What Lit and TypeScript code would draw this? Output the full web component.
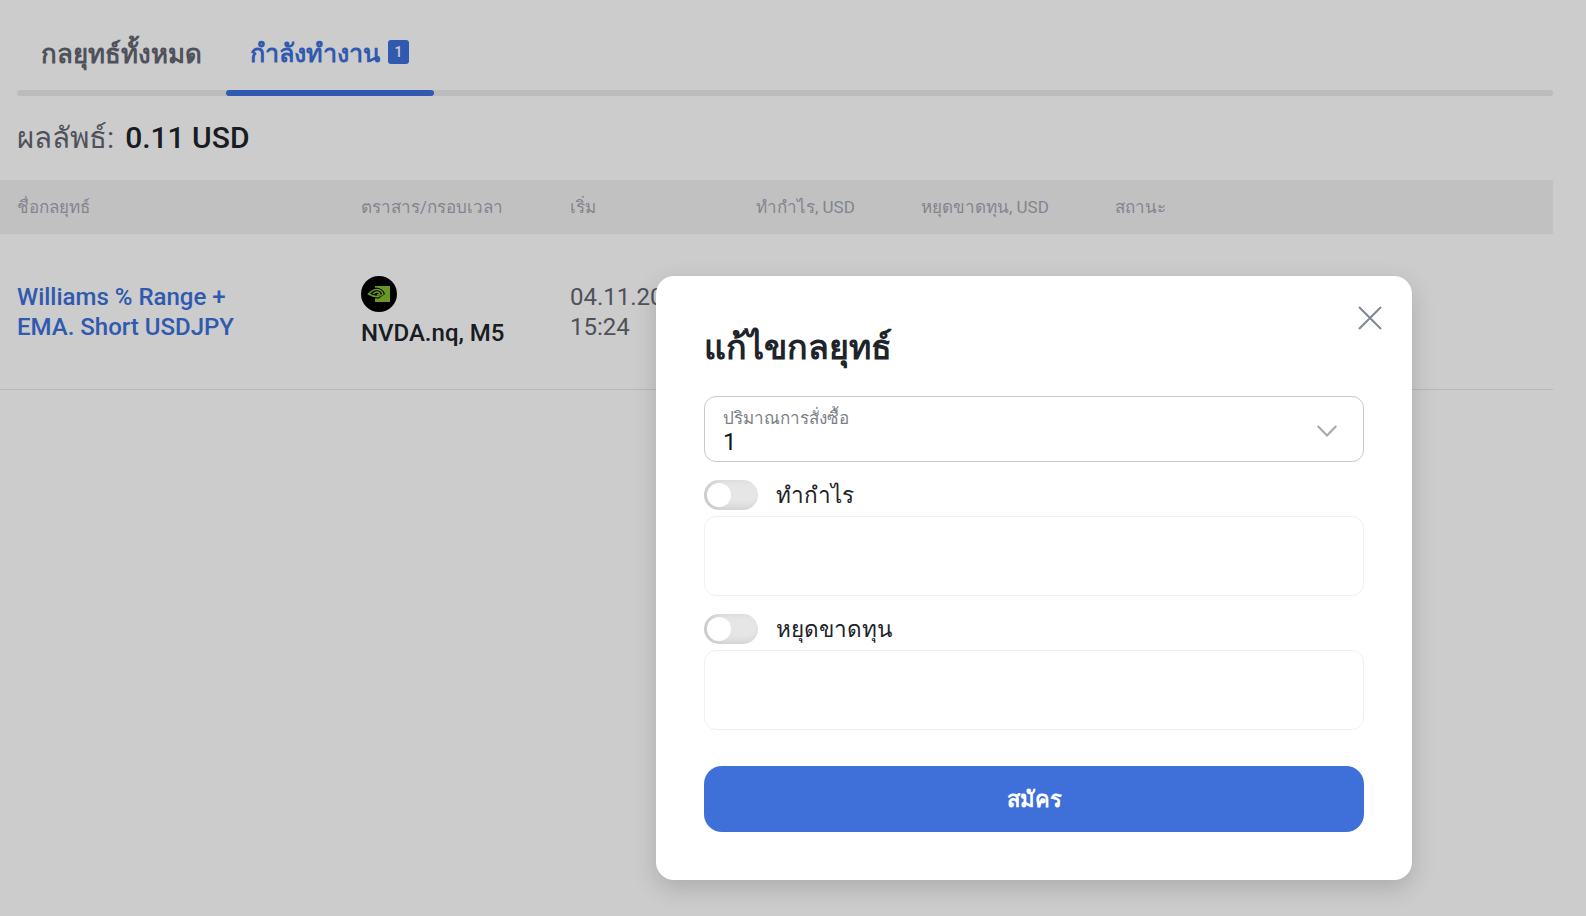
import { LitElement, html, css } from 'lit';
import { customElement } from 'lit/decorators.js';

@customElement('app-root')
export class AppRoot extends LitElement {
  static styles = css`
    :host {
      display: block;
      position: relative;
      height: 916px;
      overflow: hidden;
      background: #fff;
      color: #202329;
      font-family: Roboto, "Noto Sans", sans-serif;
    }

    /* Page behind the dialog */
    .tabs {
      display: flex;
      gap: 48px;
      height: 90px;
      padding: 26px 0 0 41px;
      box-sizing: border-box;
      font-size: 25.800px;
      font-weight: 700;
      line-height: 56px;
      color: #636771;
    }
    .tab {
      display: flex;
      gap: 8px;
    }
    .tab.active {
      color: #3b71dc;
      font-size: 25.200px;
    }
    .badge {
      width: 21px;
      height: 24px;
      margin-top: 14px;
      border-radius: 3px;
      background: #3b71dc;
      color: #fff;
      font-size: 14px;
      font-weight: 500;
      line-height: 24px;
      text-align: center;
    }
    .track {
      height: 6px;
      margin: 0 33px 0 17px;
      border-radius: 3px;
      background: #ececee;
    }
    .indicator {
      width: 208px;
      height: 6px;
      margin-left: 209px;
      border-radius: 3px;
      background: #3b71dc;
    }
    .result {
      display: flex;
      align-items: center;
      gap: 11px;
      height: 84px;
      padding: 0 0 2px 17px;
      box-sizing: border-box;
      font-size: 30px;
      color: #636771;
    }
    .result span {
      font-size: 29.500px;
    }
    .result b {
      font-weight: 500;
      color: #202329;
    }
    .grid {
      display: grid;
      grid-template-columns: 344px 209px 186px 165px 194px 1fr;
      width: 1553px;
      padding-left: 17px;
      box-sizing: border-box;
    }
    .head {
      height: 54px;
      padding-bottom: 2px;
      align-items: center;
      background: #f2f2f3;
      font-size: 17px;
      color: #a4a7b0;
    }
    .row {
      height: 156px;
      align-items: center;
      border-bottom: 1px solid #e6e6e9;
      font-size: 24px;
      line-height: 30px;
      color: #636771;
    }
    .name {
      color: #3b71dc;
      font-weight: 500;
    }
    .symbol {
      display: flex;
      flex-direction: column;
      gap: 6px;
      color: #202329;
      font-weight: 500;
    }
    .symbol svg {
      display: block;
    }

    /* Dialog */
    .overlay {
      position: absolute;
      inset: 0;
      background: rgba(0, 0, 0, 0.2);
    }
    .modal {
      position: absolute;
      left: 656px;
      top: 276px;
      width: 756px;
      height: 604px;
      padding: 48px;
      box-sizing: border-box;
      background: #fff;
      border-radius: 18px;
      box-shadow: 0 8px 24px rgba(0, 0, 0, 0.16);
    }
    .close {
      position: absolute;
      right: 30px;
      top: 30px;
      display: block;
    }
    h2 {
      margin: 0 0 24px;
      font-size: 34px;
      font-weight: 700;
      line-height: 46px;
      padding-bottom: 2px;
    }
    .select {
      display: flex;
      align-items: center;
      justify-content: space-between;
      height: 66px;
      padding: 4px 26px 0 18px;
      box-sizing: border-box;
      border: 1px solid #c8c8d2;
      border-radius: 12px;
    }
    .select label {
      display: block;
      font-size: 17px;
      line-height: 22px;
      color: #7b7f8a;
    }
    .select .value {
      font-size: 24px;
      line-height: 26px;
      color: #14161a;
    }
    .toggle-row {
      display: flex;
      align-items: center;
      gap: 18px;
      height: 30px;
      margin: 18px 0 6px;
      font-size: 22.500px;
    }
    .toggle {
      width: 54px;
      height: 30px;
      padding: 3px;
      box-sizing: border-box;
      border-radius: 15px;
      background: #e6e6e6;
      box-shadow: inset 6px -2px 8px rgba(0, 0, 0, 0.12);
    }
    .knob {
      width: 24px;
      height: 24px;
      border-radius: 50%;
      background: #fff;
    }
    .input {
      height: 80px;
      box-sizing: border-box;
      border: 1px solid #f0f0f0;
      border-radius: 12px;
    }
    .submit {
      display: block;
      width: 100%;
      height: 66px;
      margin-top: 36px;
      border: 0;
      border-radius: 18px;
      background: #3f70d9;
      color: #fff;
      font-family: inherit;
      font-size: 22px;
      font-weight: 700;
    }
  `;

  renderLogo() {
    return html`
      <svg width="36" height="36" viewBox="0 0 36 36">
        <circle cx="18" cy="18" r="18" fill="#000"></circle>
        <path d="M14 10h15v16H14z" fill="#84bd32"></path>
        <path d="M5 18c3-4 7-6.500 10-6.500 4 0 8 3 9 6.500-2 1.500-4 2.500-6 4.500-4 .5-9-1-13-4.500z" fill="#000"></path>
        <path d="M7.500 18c3-3 5.500-4.500 8-4.500 3 0 5.500 2 6.500 4.500-1.500 1-3 2-5 2.800-3 0-6.500-1-9.500-2.800z" fill="none" stroke="#84bd32" stroke-width="1.500"></path>
        <path d="M12 18c1.500-1.300 3-2 4-2 1.500 0 2.500 1 2.800 2.200-1 .8-2 1-3 .8" fill="none" stroke="#84bd32" stroke-width="1.500"></path>
      </svg>
    `;
  }

  renderToggle(label: string) {
    return html`
      <div class="toggle-row">
        <div class="toggle"><div class="knob"></div></div>
        <span>${label}</span>
      </div>
      <div class="input"></div>
    `;
  }

  render() {
    return html`
      <div class="tabs">
        <div class="tab">กลยุทธ์ทั้งหมด</div>
        <div class="tab active">กำลังทำงาน<span class="badge">1</span></div>
      </div>
      <div class="track"><div class="indicator"></div></div>
      <div class="result"><span>ผลลัพธ์:</span> <b>0.11 USD</b></div>
      <div class="grid head">
        <div>ชื่อกลยุทธ์</div>
        <div>ตราสาร/กรอบเวลา</div>
        <div>เริ่ม</div>
        <div>ทำกำไร, USD</div>
        <div>หยุดขาดทุน, USD</div>
        <div>สถานะ</div>
      </div>
      <div class="grid row">
        <div class="name">Williams % Range +<br />EMA. Short USDJPY</div>
        <div class="symbol">${this.renderLogo()}<span>NVDA.nq, M5</span></div>
        <div>04.11.2024<br />15:24</div>
      </div>

      <div class="overlay"></div>
      <div class="modal">
        <svg class="close" width="24" height="24" viewBox="0 0 24 24">
          <path d="M1 1l22 22M23 1L1 23" stroke="#7f8794" stroke-width="2" fill="none"></path>
        </svg>
        <h2>แก้ไขกลยุทธ์</h2>
        <div class="select">
          <div>
            <label>ปริมาณการสั่งซื้อ</label>
            <div class="value">1</div>
          </div>
          <svg width="20" height="12" viewBox="0 0 20 12">
            <path d="M.7 1l9.300 9.500L19.300 1" stroke="#a3a7b3" stroke-width="2" fill="none"></path>
          </svg>
        </div>
        ${this.renderToggle('ทำกำไร')}
        ${this.renderToggle('หยุดขาดทุน')}
        <button class="submit">สมัคร</button>
      </div>
    `;
  }
}
